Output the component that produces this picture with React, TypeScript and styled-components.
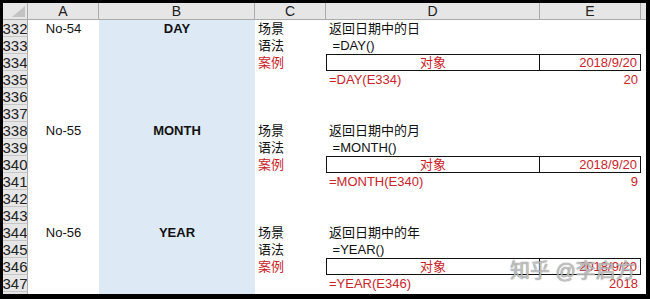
import React from "react";
import styled, { createGlobalStyle } from "styled-components";

const Global = createGlobalStyle`
  html, body { margin: 0; padding: 0; background: #000; }
  body { font-family: "Liberation Sans", "Noto Sans CJK SC", sans-serif; }
`;

const RED = "#c9242b";
const COLS = "25px 71px 156px 71px 214px 101px 1fr";

const Frame = styled.div`
  width: 650px;
  height: 299px;
  box-sizing: border-box;
  padding: 3px 4px 5px 3px;
  background: #000;
`;

const Sheet = styled.div`
  position: relative;
  width: 100%;
  height: 100%;
  background: #fff;
  overflow: hidden;
`;

const HeaderRow = styled.div`
  display: grid;
  grid-template-columns: ${COLS};
  height: 17px;
  background: #e6e6e6;
  border-bottom: 1px solid #ababab;
  box-sizing: border-box;
`;

const ColHead = styled.div`
  display: flex;
  align-items: center;
  justify-content: center;
  border-right: 1px solid #ababab;
  font-size: 14px;
  color: #222;
  line-height: 16px;
  &:last-child { border-right: none; }
`;

const Corner = styled.div`
  position: relative;
  border-right: 1px solid #ababab;
  svg { position: absolute; right: 2px; bottom: 2px; }
`;

const Row = styled.div`
  display: grid;
  grid-template-columns: ${COLS};
  height: 17px;
`;

const RowNum = styled.div`
  background: #e6e6e6;
  border-right: 1px solid #ababab;
  border-bottom: 1px solid #c6c6c6;
  box-sizing: border-box;
  font-size: 15px;
  line-height: 17px;
  color: #222;
  display: flex;
  justify-content: center;
  overflow: hidden;
  white-space: nowrap;
`;

const Cell = styled.div<{
  $align?: "left" | "center" | "right";
  $bold?: boolean;
  $red?: boolean;
  $fill?: boolean;
  $boxL?: boolean;
  $boxR?: boolean;
}>`
  box-sizing: border-box;
  background: ${(p) => (p.$fill ? "#dde9f5" : "#fff")};
  font-size: 13px;
  line-height: 17px;
  font-weight: ${(p) => (p.$bold ? 700 : 400)};
  color: ${(p) => (p.$red ? RED : "#111")};
  text-align: ${(p) => p.$align ?? "left"};
  padding: 0 3px;
  white-space: pre;
  overflow: visible;
  ${(p) =>
    p.$boxL || p.$boxR
      ? `border-top: 1px solid #111; border-bottom: 1px solid #111; line-height: 15px;`
      : ""}
  ${(p) => (p.$boxL ? `border-left: 1px solid #111; border-right: 1px solid #111;` : "")}
  ${(p) => (p.$boxR ? `border-right: 1px solid #111;` : "")}
`;

const Watermark = styled.div`
  position: absolute;
  left: 507px;
  top: 252px;
  font-size: 20px;
  color: rgba(255, 255, 255, 0.55);
  text-shadow: 0 0 1px rgba(90, 90, 90, 0.75), 0 0 1px rgba(90, 90, 90, 0.6);
  white-space: nowrap;
  pointer-events: none;
`;

type Block = { no: string; name: string; desc: string; syntax: string; formula: string; result: string };

const blocks: Block[] = [
  { no: "No-54", name: "DAY", desc: "返回日期中的日", syntax: " =DAY()", formula: "=DAY(E334)", result: "20" },
  { no: "No-55", name: "MONTH", desc: "返回日期中的月", syntax: " =MONTH()", formula: "=MONTH(E340)", result: "9" },
  { no: "No-56", name: "YEAR", desc: "返回日期中的年", syntax: " =YEAR()", formula: "=YEAR(E346)", result: "2018" },
];

type RowData = {
  a?: string;
  b?: string;
  c?: string;
  cRed?: boolean;
  d?: string;
  dRed?: boolean;
  e?: string;
  box?: boolean;
};

const rows: RowData[] = [];
blocks.forEach((b, i) => {
  rows.push({ a: b.no, b: b.name, c: "场景", d: b.desc });
  rows.push({ c: "语法", d: b.syntax });
  rows.push({ c: "案例", cRed: true, d: "对象", e: "2018/9/20", box: true });
  rows.push({ d: b.formula, dRed: true, e: b.result });
  if (i < blocks.length - 1) {
    rows.push({});
    rows.push({});
  }
});
rows.push({});

const CornerTriangle = () => (
  <svg width="13" height="11" viewBox="0 0 13 11">
    <polygon points="13,0 13,11 0,11" fill="#c3c3c3" />
  </svg>
);

export default function App() {
  return (
    <>
      <Global />
      <Frame>
        <Sheet>
          <HeaderRow>
            <Corner>
              <CornerTriangle />
            </Corner>
            {["A", "B", "C", "D", "E", ""].map((h, i) => (
              <ColHead key={i}>{h}</ColHead>
            ))}
          </HeaderRow>
          {rows.map((r, i) => (
            <Row key={i}>
              <RowNum>{332 + i}</RowNum>
              <Cell $align="center">{r.a}</Cell>
              <Cell $align="center" $bold $fill>
                {r.b}
              </Cell>
              <Cell $red={r.cRed}>{r.c}</Cell>
              <Cell $red={r.dRed || r.box} $align={r.box ? "center" : "left"} $boxL={r.box}>
                {r.d}
              </Cell>
              <Cell $red $align="right" $boxR={r.box}>
                {r.e}
              </Cell>
              <Cell />
            </Row>
          ))}
          <Watermark>知乎 @李启方</Watermark>
        </Sheet>
      </Frame>
    </>
  );
}
